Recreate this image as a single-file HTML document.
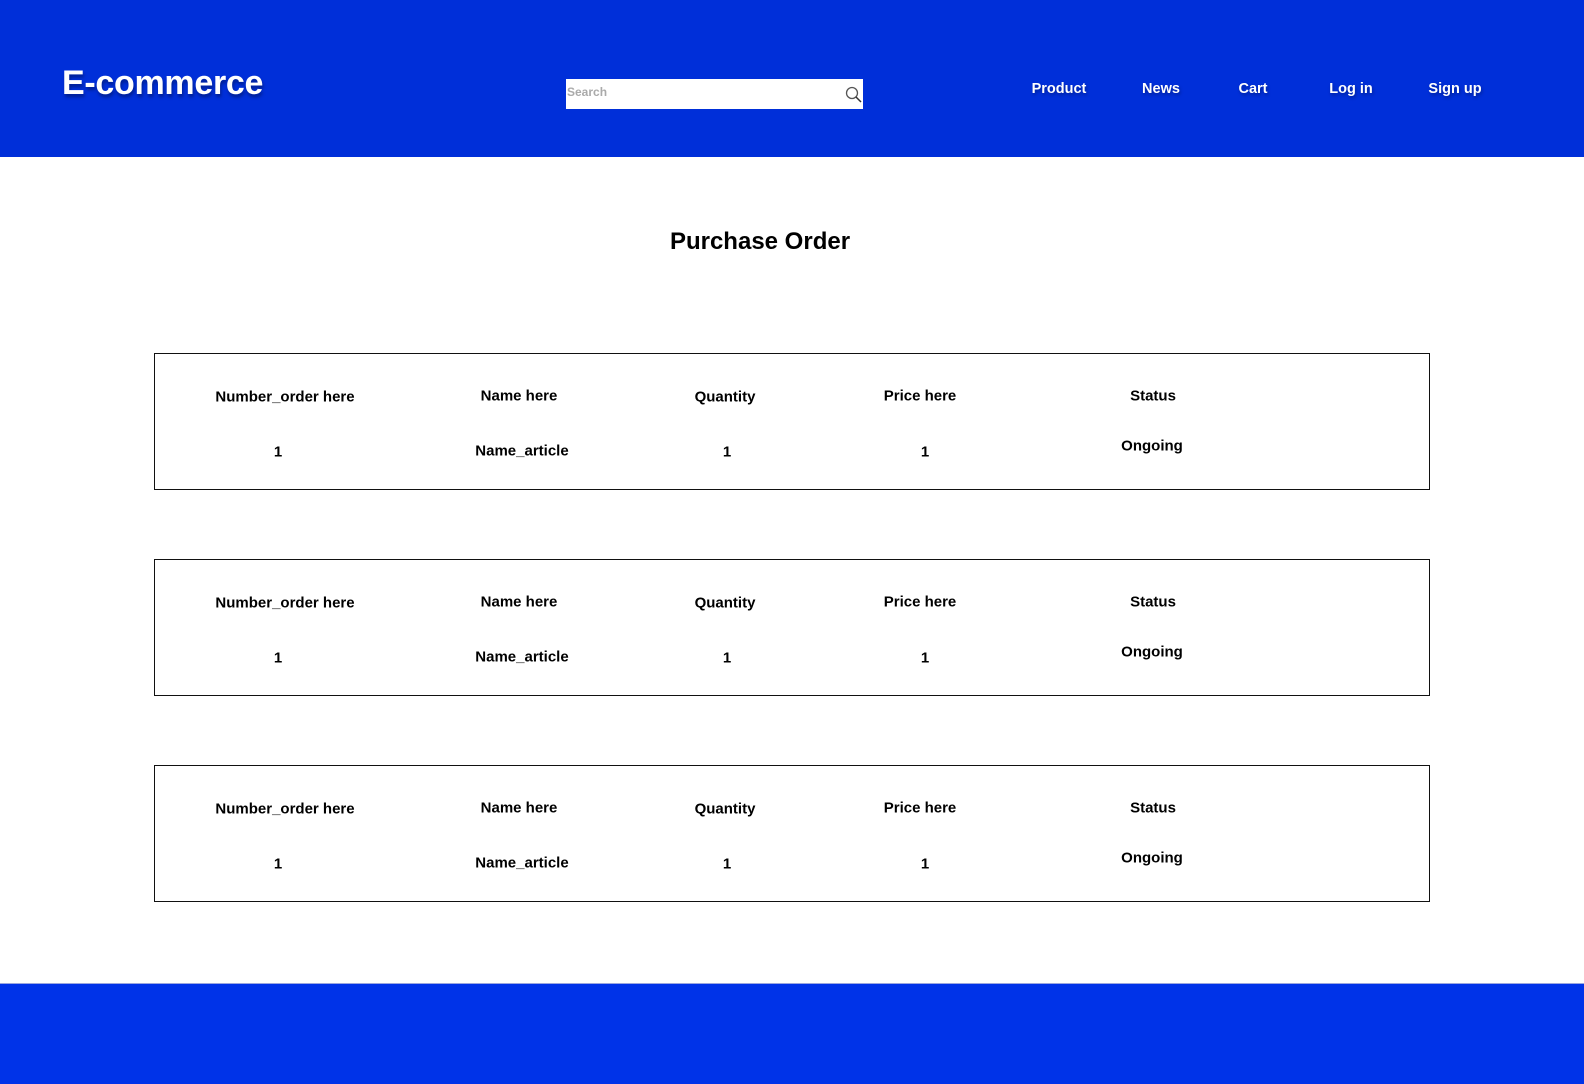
<!DOCTYPE html>
<html><head><meta charset="utf-8"><style>
*{margin:0;padding:0;box-sizing:border-box}
body{width:1584px;height:1084px;position:relative;background:#fff;font-family:"Liberation Sans",Arial,sans-serif;overflow:hidden}
.hdr{position:absolute;left:0;top:0;width:1584px;height:157px;background:#002fd9}
.ftr{position:absolute;left:0;top:983px;width:1584px;height:101px;background:#0033e8;border-top:1px solid #9aa6e0}
.logo{position:absolute;left:62px;top:64px;font-size:34px;font-weight:bold;color:#fff;text-shadow:1px 3px 3px rgba(0,0,0,.35);letter-spacing:-0.3px}
.search{position:absolute;left:566px;top:79px;width:297px;height:30px;background:#fff}
.search span{position:absolute;left:1px;top:6px;font-size:12px;font-weight:bold;color:#aaa}
.search svg{position:absolute;left:279px;top:7px}
.nav{position:absolute;top:81px;font-size:14.5px;font-weight:bold;color:#fff;transform:translateX(-50%);text-shadow:1px 2px 3px rgba(0,0,0,.3);white-space:nowrap}
h1{position:absolute;left:760px;top:228px;transform:translateX(-50%);font-size:24px;font-weight:bold;white-space:nowrap}
.box{position:absolute;left:154px;width:1276px;height:137px;border:1px solid #111}
.c{position:absolute;font-size:15px;font-weight:bold;transform:translate(-50%,-50%);white-space:nowrap;color:#000}
</style></head><body>
<div class="hdr">
<div class="logo">E-commerce</div>
<div class="search"><span>Search</span><svg width="17" height="17" viewBox="0 0 17 17"><circle cx="7" cy="7" r="5.5" fill="none" stroke="#555" stroke-width="1.3"/><line x1="11" y1="11" x2="16" y2="16" stroke="#333" stroke-width="1.5"/></svg></div>
<div class="nav" style="left:1059px">Product</div>
<div class="nav" style="left:1161px">News</div>
<div class="nav" style="left:1253px">Cart</div>
<div class="nav" style="left:1351px">Log in</div>
<div class="nav" style="left:1455px">Sign up</div>
</div>
<h1>Purchase Order</h1>

<div class="box" style="top:353px"></div>
<div class="box" style="top:559px"></div>
<div class="box" style="top:765px"></div>

<div id="rows"></div>
<script>
var tops=[354,560,766],h="";
tops.forEach(function(t){
 h+='<div class="c" style="left:285px;top:'+(t+43)+'px">Number_order here</div>';
 h+='<div class="c" style="left:519px;top:'+(t+42)+'px">Name here</div>';
 h+='<div class="c" style="left:725px;top:'+(t+43)+'px">Quantity</div>';
 h+='<div class="c" style="left:920px;top:'+(t+42)+'px">Price here</div>';
 h+='<div class="c" style="left:1153px;top:'+(t+42)+'px">Status</div>';
 h+='<div class="c" style="left:278px;top:'+(t+98)+'px">1</div>';
 h+='<div class="c" style="left:522px;top:'+(t+97)+'px">Name_article</div>';
 h+='<div class="c" style="left:727px;top:'+(t+98)+'px">1</div>';
 h+='<div class="c" style="left:925px;top:'+(t+98)+'px">1</div>';
 h+='<div class="c" style="left:1152px;top:'+(t+92)+'px">Ongoing</div>';
});
document.getElementById('rows').innerHTML=h;
</script>
<div class="ftr"></div>
</body></html>
